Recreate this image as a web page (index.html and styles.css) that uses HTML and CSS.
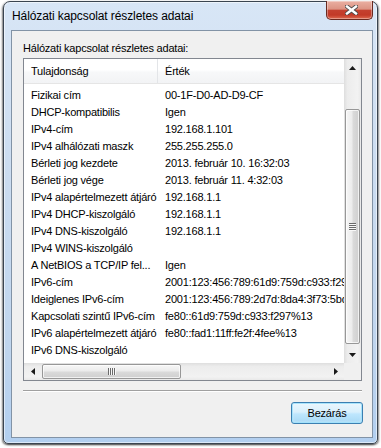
FILE: index.html
```html
<!DOCTYPE html>
<html lang="hu">
<head>
<meta charset="utf-8">
<title>Hálózati kapcsolat részletes adatai</title>
<link rel="stylesheet" href="styles.css">
</head>
<body>
<div class="window">
  <div class="titlebar">
    <span class="title">Hálózati kapcsolat részletes adatai</span>
    <div class="close">
      <svg width="13" height="10" viewBox="0 0 13 10">
        <path d="M2 1.5 L11 8.5 M11 1.5 L2 8.5" stroke="#4a4a4a" stroke-width="4.2" stroke-linecap="square" fill="none"/>
        <path d="M2 1.5 L11 8.5 M11 1.5 L2 8.5" stroke="#ffffff" stroke-width="2.4" stroke-linecap="square" fill="none"/>
      </svg>
    </div>
  </div>
  <div class="client">
    <div class="label">Hálózati kapcsolat részletes adatai:</div>
    <div class="listbox">
      <div class="view">
        <div class="header">
          <div class="c1">Tulajdonság</div>
          <div class="c2">Érték</div>
        </div>
        <div class="rows">
          <div class="row"><div class="c1">Fizikai cím</div><div class="c2">00-1F-D0-AD-D9-CF</div></div>
          <div class="row"><div class="c1">DHCP-kompatibilis</div><div class="c2">Igen</div></div>
          <div class="row"><div class="c1">IPv4-cím</div><div class="c2">192.168.1.101</div></div>
          <div class="row"><div class="c1">IPv4 alhálózati maszk</div><div class="c2">255.255.255.0</div></div>
          <div class="row"><div class="c1">Bérleti jog kezdete</div><div class="c2">2013. február 10. 16:32:03</div></div>
          <div class="row"><div class="c1">Bérleti jog vége</div><div class="c2">2013. február 11. 4:32:03</div></div>
          <div class="row"><div class="c1">IPv4 alapértelmezett átjáró</div><div class="c2">192.168.1.1</div></div>
          <div class="row"><div class="c1">IPv4 DHCP-kiszolgáló</div><div class="c2">192.168.1.1</div></div>
          <div class="row"><div class="c1">IPv4 DNS-kiszolgáló</div><div class="c2">192.168.1.1</div></div>
          <div class="row"><div class="c1">IPv4 WINS-kiszolgáló</div><div class="c2"></div></div>
          <div class="row"><div class="c1">A NetBIOS a TCP/IP fel...</div><div class="c2">Igen</div></div>
          <div class="row"><div class="c1">IPv6-cím</div><div class="c2">2001:123:456:789:61d9:759d:c933:f297</div></div>
          <div class="row"><div class="c1">Ideiglenes IPv6-cím</div><div class="c2">2001:123:456:789:2d7d:8da4:3f73:5bd1</div></div>
          <div class="row"><div class="c1">Kapcsolati szintű IPv6-cím</div><div class="c2">fe80::61d9:759d:c933:f297%13</div></div>
          <div class="row"><div class="c1">IPv6 alapértelmezett átjáró</div><div class="c2">fe80::fad1:11ff:fe2f:4fee%13</div></div>
          <div class="row"><div class="c1">IPv6 DNS-kiszolgáló</div><div class="c2"></div></div>
        </div>
      </div>
      <div class="vscroll">
        <div class="sbtn"><svg width="7" height="4" viewBox="0 0 7 4"><path d="M3.5 0 L7 4 L0 4 Z" fill="#1a1a1a"/></svg></div>
        <div class="vtrack-top"></div>
        <div class="vthumb"><div class="grip-v"><i></i><i></i><i></i><i></i></div></div>
        <div class="vtrack-bottom"></div>
        <div class="sbtn"><svg width="7" height="4" viewBox="0 0 7 4"><path d="M0 0 L7 0 L3.5 4 Z" fill="#1a1a1a"/></svg></div>
      </div>
      <div class="hscroll">
        <div class="sbtn"><svg width="4" height="7" viewBox="0 0 4 7"><path d="M0 3.5 L4 0 L4 7 Z" fill="#1a1a1a"/></svg></div>
        <div class="hthumb"><div class="grip-h"><i></i><i></i><i></i><i></i></div></div>
        <div class="htrack"></div>
        <div class="sbtn"><svg width="4" height="7" viewBox="0 0 4 7"><path d="M0 0 L4 3.5 L0 7 Z" fill="#1a1a1a"/></svg></div>
      </div>
      <div class="corner"></div>
    </div>
    <div class="sep"></div>
    <div class="actions">
      <button class="btn">Bezárás</button>
    </div>
  </div>
</div>
</body>
</html>
```
FILE: styles.css
```css
html, body {
  margin: 0;
  padding: 0;
}
body {
  width: 381px;
  height: 448px;
  overflow: hidden;
  background: #ffffff;
  font-family: "Liberation Sans", Arial, sans-serif;
  font-size: 11px;
  letter-spacing: -0.2px;
  color: #000;
}
.window {
  box-sizing: border-box;
  margin: 1px 0 0 3px;
  width: 375px;
  height: 443px;
  border: 1px solid #3a4450;
  border-radius: 7px 7px 5px 5px;
  background: linear-gradient(#d8e6f6, #cbdcf0 40%, #bfd5ee 80%, #b2cff0);
  box-shadow: inset 0 0 0 1px rgba(255,255,255,0.55), -1px 1px 2px rgba(0,0,0,0.5), 1px 1px 2px rgba(0,0,0,0.45);
  display: flex;
  flex-direction: column;
  padding: 0 4px 5px 7px;
}
.titlebar {
  height: 28px;
  display: flex;
  align-items: flex-start;
  flex: none;
}
.title {
  margin: 6px 0 0 1px;
  font-size: 12px;
  letter-spacing: -0.1px;
  line-height: 16px;
  color: #000;
}
.close {
  margin-left: auto;
  margin-top: -1px;
  width: 47px;
  height: 19px;
  box-sizing: border-box;
  border: 1px solid #6a2a20;
  border-top: none;
  border-radius: 0 0 5px 5px;
  background: linear-gradient(#eab0a2, #dc9383 45%, #c4412f 52%, #c23a27 78%, #de6a50);
  box-shadow: inset 0 0 0 1px rgba(255,255,255,0.35);
  display: flex;
  align-items: center;
  justify-content: center;
}
.close svg {
  display: block;
  margin-left: 3px;
}
.client {
  flex: 1;
  box-sizing: border-box;
  border: 1px solid #8293a6;
  background: #f0f0f0;
  padding: 0 10px 0 11px;
  display: flex;
  flex-direction: column;
}
.label {
  margin-top: 10px;
  line-height: 14px;
  height: 14px;
  margin-bottom: 3px;
}
.listbox {
  box-sizing: border-box;
  height: 323px;
  border: 1px solid #828790;
  background: #fff;
  display: grid;
  grid-template-columns: 1fr 17px;
  grid-template-rows: 1fr 17px;
  overflow: hidden;
}
.view {
  overflow: hidden;
  min-width: 0;
}
.header {
  display: flex;
  height: 24px;
  border-bottom: 1px solid #e5e5e5;
  background: linear-gradient(#ffffff, #ffffff 45%, #f7f8f9 55%, #f2f3f5);
  align-items: stretch;
}
.header .c1 {
  border-right: 1px solid #e3e5e8;
}
.c1 {
  box-sizing: border-box;
  width: 134px;
  flex: none;
  padding-left: 7px;
  white-space: nowrap;
  overflow: hidden;
  display: flex;
  align-items: center;
}
.c2 {
  padding-left: 7px;
  white-space: nowrap;
  display: flex;
  align-items: center;
}
.rows {
  padding-top: 3px;
}
.row {
  display: flex;
  height: 17px;
  line-height: 17px;
}
.vscroll {
  display: flex;
  flex-direction: column;
  background: linear-gradient(to right, #dedede, #ececec 20%, #f2f2f2 80%, #e9e9e9);
}
.sbtn {
  width: 17px;
  height: 17px;
  flex: none;
  display: flex;
  align-items: center;
  justify-content: center;
}
.vtrack-top {
  height: 33px;
  flex: none;
}
.vthumb {
  box-sizing: border-box;
  height: 235px;
  margin: 0 1px;
  border: 1px solid #979797;
  border-radius: 2px;
  background: linear-gradient(to right, #f6f6f6, #ececec 45%, #dadada 55%, #cfcfcf);
  box-shadow: inset 0 0 0 1px rgba(255,255,255,0.7);
  display: flex;
  align-items: center;
  justify-content: center;
  flex: none;
}
.vtrack-bottom {
  flex: 1;
}
.grip-v {
  display: flex;
  flex-direction: column;
}
.grip-v i {
  display: block;
  width: 7px;
  height: 1px;
  background: #6b6b6b;
  border-bottom: 1px solid #f8f8f8;
}
.hscroll {
  display: flex;
  background: linear-gradient(#dedede, #ececec 20%, #f2f2f2 80%, #e9e9e9);
}
.hthumb {
  box-sizing: border-box;
  width: 139px;
  margin: 1px 0 1px 1px;
  border: 1px solid #979797;
  border-radius: 2px;
  background: linear-gradient(#f6f6f6, #ececec 45%, #dadada 55%, #cfcfcf);
  box-shadow: inset 0 0 0 1px rgba(255,255,255,0.7);
  display: flex;
  align-items: center;
  justify-content: center;
  flex: none;
}
.grip-h {
  display: flex;
}
.grip-h i {
  display: block;
  width: 1px;
  height: 7px;
  background: #6b6b6b;
  border-right: 1px solid #f8f8f8;
}
.htrack {
  flex: 1;
}
.corner {
  background: #f0f0f0;
}
.sep {
  margin-top: 9px;
  border-top: 1px solid #a0a0a0;
  border-bottom: 1px solid #ffffff;
}
.actions {
  display: flex;
  justify-content: flex-end;
  margin-top: 10px;
  margin-right: -1px;
}
.btn {
  box-sizing: border-box;
  width: 72px;
  height: 22px;
  border: 1px solid #3c7fb1;
  border-radius: 3px;
  background: linear-gradient(#eaf6fd, #d9f0fc 45%, #bee6fd 55%, #a7d9f5);
  box-shadow: inset 0 0 0 1px rgba(160, 225, 252, 0.9), inset 0 0 3px rgba(255,255,255,0.8);
  font-family: "Liberation Sans", Arial, sans-serif;
  font-size: 11px;
  letter-spacing: -0.2px;
  color: #000;
  padding: 0;
}
```
